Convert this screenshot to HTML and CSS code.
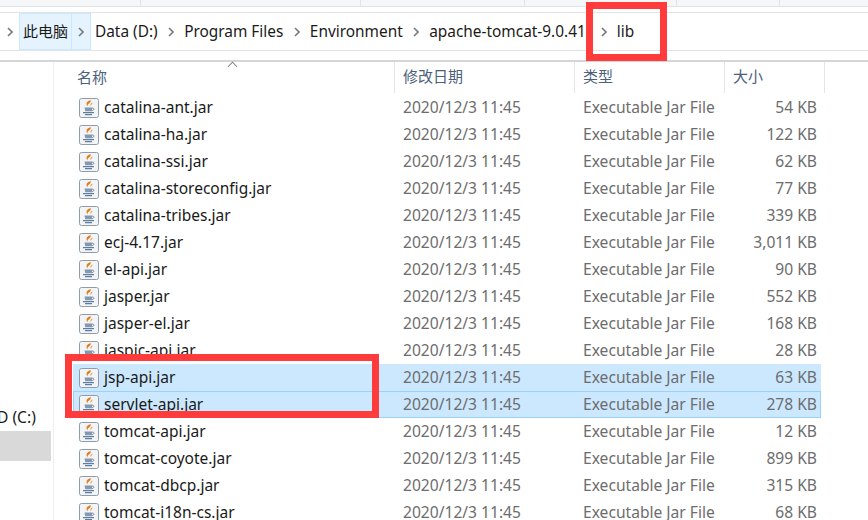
FILE: index.html
```html
<!DOCTYPE html>
<html lang="zh-CN">
<head>
    <meta charset="UTF-8">
    <title>lib</title>
    <link rel="stylesheet" href="styles.css">
</head>
<body>
    <svg class="defs" width="0" height="0">
        <symbol id="jar" viewBox="0 0 20 20">
            <rect x="0.5" y="0.5" width="19" height="19" rx="2" fill="#f3f4f6" stroke="#8e9cab"/>
            <path d="M11.500 2c-4 1.800-5 3.500-3 6.500 -.2-1.800 .9-2.500 2-3.400 1.200-1 1.500-2 1-3.100z" fill="#e67a14"/>
            <path d="M13.500 4.500c-2.200 1-2.500 2.400-1.500 4 -.1-1.200 .5-1.800 1-2.400 .4-.5 .6-1 .5-1.600z" fill="#ef9a45"/>
            <path d="M5.500 9.500h8l-.8 3.800h-6.400z" fill="#8297b0"/>
            <path d="M13.300 10.200c2.300-.3 2.300 2.200-.8 2.600" fill="none" stroke="#7489a3"/>
            <path d="M4 14.600h11M6 16.600h7" stroke="#5f7d9f" stroke-width="1.200"/>
        </symbol>
        <symbol id="chevron" viewBox="0 0 6 10">
            <path d="M1 1l4 4-4 4" fill="none" stroke="#7a7a7a" stroke-width="1.600"/>
        </symbol>
    </svg>
    <div class="tabs">
        <span class="tab tab-a"></span>
        <span class="tab tab-b"></span>
        <span class="tab tab-c"></span>
        <span class="tab tab-d"></span>
        <span class="tab tab-e"></span>
    </div>
    <nav class="address">
        <span class="sep first"><svg class="chevron"><use href="#chevron"/></svg></span>
        <span class="crumb hot">此电脑</span>
        <span class="sep hot-sep"><svg class="chevron"><use href="#chevron"/></svg></span>
        <span class="crumb data">Data (D:)</span>
        <span class="sep"><svg class="chevron"><use href="#chevron"/></svg></span>
        <span class="crumb">Program Files</span>
        <span class="sep"><svg class="chevron"><use href="#chevron"/></svg></span>
        <span class="crumb">Environment</span>
        <span class="sep"><svg class="chevron"><use href="#chevron"/></svg></span>
        <span class="crumb">apache-tomcat-9.0.41</span>
        <span class="sep last"><svg class="chevron"><use href="#chevron"/></svg></span>
        <span class="crumb">lib</span>
    </nav>
    <div class="main">
        <aside class="sidebar">
            <div class="drive">D (C:)</div>
            <div class="drive-selected"></div>
        </aside>
        <section class="files">
            <div class="sort-arrow"></div>
            <div class="row head">
                <div class="c-name">名称</div>
                <div class="c-date">修改日期</div>
                <div class="c-type">类型</div>
                <div class="c-size">大小</div>
            </div>
            <div class="row"><div class="c-name"><svg class="icon"><use href="#jar"/></svg>catalina-ant.jar</div><div class="c-date">2020/12/3 11:45</div><div class="c-type">Executable Jar File</div><div class="c-size">54 KB</div></div>
            <div class="row"><div class="c-name"><svg class="icon"><use href="#jar"/></svg>catalina-ha.jar</div><div class="c-date">2020/12/3 11:45</div><div class="c-type">Executable Jar File</div><div class="c-size">122 KB</div></div>
            <div class="row"><div class="c-name"><svg class="icon"><use href="#jar"/></svg>catalina-ssi.jar</div><div class="c-date">2020/12/3 11:45</div><div class="c-type">Executable Jar File</div><div class="c-size">62 KB</div></div>
            <div class="row"><div class="c-name"><svg class="icon"><use href="#jar"/></svg>catalina-storeconfig.jar</div><div class="c-date">2020/12/3 11:45</div><div class="c-type">Executable Jar File</div><div class="c-size">77 KB</div></div>
            <div class="row"><div class="c-name"><svg class="icon"><use href="#jar"/></svg>catalina-tribes.jar</div><div class="c-date">2020/12/3 11:45</div><div class="c-type">Executable Jar File</div><div class="c-size">339 KB</div></div>
            <div class="row"><div class="c-name"><svg class="icon"><use href="#jar"/></svg>ecj-4.17.jar</div><div class="c-date">2020/12/3 11:45</div><div class="c-type">Executable Jar File</div><div class="c-size">3,011 KB</div></div>
            <div class="row"><div class="c-name"><svg class="icon"><use href="#jar"/></svg>el-api.jar</div><div class="c-date">2020/12/3 11:45</div><div class="c-type">Executable Jar File</div><div class="c-size">90 KB</div></div>
            <div class="row"><div class="c-name"><svg class="icon"><use href="#jar"/></svg>jasper.jar</div><div class="c-date">2020/12/3 11:45</div><div class="c-type">Executable Jar File</div><div class="c-size">552 KB</div></div>
            <div class="row"><div class="c-name"><svg class="icon"><use href="#jar"/></svg>jasper-el.jar</div><div class="c-date">2020/12/3 11:45</div><div class="c-type">Executable Jar File</div><div class="c-size">168 KB</div></div>
            <div class="row"><div class="c-name"><svg class="icon"><use href="#jar"/></svg>jaspic-api.jar</div><div class="c-date">2020/12/3 11:45</div><div class="c-type">Executable Jar File</div><div class="c-size">28 KB</div></div>
            <div class="row selected"><div class="c-name"><svg class="icon"><use href="#jar"/></svg>jsp-api.jar</div><div class="c-date">2020/12/3 11:45</div><div class="c-type">Executable Jar File</div><div class="c-size">63 KB</div></div>
            <div class="row selected focused"><div class="c-name"><svg class="icon"><use href="#jar"/></svg>servlet-api.jar</div><div class="c-date">2020/12/3 11:45</div><div class="c-type">Executable Jar File</div><div class="c-size">278 KB</div></div>
            <div class="row"><div class="c-name"><svg class="icon"><use href="#jar"/></svg>tomcat-api.jar</div><div class="c-date">2020/12/3 11:45</div><div class="c-type">Executable Jar File</div><div class="c-size">12 KB</div></div>
            <div class="row"><div class="c-name"><svg class="icon"><use href="#jar"/></svg>tomcat-coyote.jar</div><div class="c-date">2020/12/3 11:45</div><div class="c-type">Executable Jar File</div><div class="c-size">899 KB</div></div>
            <div class="row"><div class="c-name"><svg class="icon"><use href="#jar"/></svg>tomcat-dbcp.jar</div><div class="c-date">2020/12/3 11:45</div><div class="c-type">Executable Jar File</div><div class="c-size">315 KB</div></div>
            <div class="row"><div class="c-name"><svg class="icon"><use href="#jar"/></svg>tomcat-i18n-cs.jar</div><div class="c-date">2020/12/3 11:45</div><div class="c-type">Executable Jar File</div><div class="c-size">68 KB</div></div>
        </section>
    </div>
    <div class="mark mark-lib"></div>
    <div class="mark mark-rows"></div>
</body>
</html>
```

FILE: styles.css
```css
html, body {
    height: 100%;
}
body {
    margin: 0;
    overflow: hidden;
    background: #fff;
    font-family: "Noto Sans", "Noto Sans CJK SC", sans-serif;
    font-size: 15.6px;
    color: #1a1a1a;
}
.defs {
    display: none;
}
.tabs {
    display: flex;
    height: 6px;
    background: #f5f6f7;
    border-bottom: 1px solid #e2e3e5;
}
.tab {
    border-right: 1px solid #e2e3e5;
}
.tab-a { width: 140px; }
.tab-b { width: 219px; }
.tab-c { width: 163px; }
.tab-d { width: 151px; }
.tab-e { width: 102px; }
.address {
    display: flex;
    align-items: center;
    height: 37px;
    margin-top: 5px;
    border-top: 1px solid #e2e3e5;
    border-bottom: 1px solid #e2e3e5;
    font-size: 15.4px;
}
.crumb {
    white-space: nowrap;
}
.data {
    margin-left: 4px;
}
.sep {
    display: flex;
    flex: none;
    align-items: center;
    justify-content: center;
    width: 26.5px;
}
.first {
    width: 19px;
}
.last {
    box-sizing: border-box;
    width: 31px;
    padding-left: 5px;
}
.chevron {
    width: 6px;
    height: 10px;
}
.hot, .hot-sep {
    display: flex;
    align-items: center;
    align-self: stretch;
    box-sizing: border-box;
    background: #e5f3ff;
    border: 1px solid #cce8ff;
}
.hot {
    width: 53px;
    padding: 0 0 2px 3px;
    font-size: 15px;
}
.hot-sep {
    width: 19px;
    border-left: 0;
}
.main {
    display: flex;
    margin-top: 9px;
    border-top: 2px solid #d5d5d5;
    height: 459px;
}
.sidebar {
    width: 53px;
    border-right: 1px solid #eee;
    overflow: hidden;
    flex: none;
}
.drive {
    margin: 344px 0 0 -3px;
    line-height: 22px;
}
.drive-selected {
    width: 51px;
    height: 30px;
    margin-top: 3px;
    background: #d9d9d9;
}
.files {
    position: relative;
    padding-left: 19px;
}
.sort-arrow {
    position: absolute;
    left: 175px;
    top: 1px;
    width: 6px;
    height: 6px;
    border-left: 1px solid #888;
    border-top: 1px solid #888;
    transform: rotate(45deg);
}
.row {
    display: grid;
    grid-template-columns: 322px 180px 150px 96px;
    width: 748px;
    height: 27px;
    line-height: 27px;
    box-sizing: border-box;
    white-space: nowrap;
}
.row > div {
    overflow: hidden;
}
.head {
    grid-template-columns: 322px 180px 150px 100px;
    width: 752px;
    height: 32px;
    line-height: 29px;
    font-size: 15px;
}
.head > div {
    height: 31px;
    border-right: 1px solid #e5e5e5;
    box-sizing: border-box;
}
.c-name {
    padding-left: 4px;
    display: flex;
    align-items: center;
    font-size: 15.5px;
}
.c-date, .c-type, .c-size {
    padding-left: 8px;
    color: #6d6d6d;
}
.c-size {
    text-align: right;
    padding: 0 4px 0 0;
}
.head .c-name, .head .c-date, .head .c-type, .head .c-size {
    color: #4c607a;
    font-size: 15px;
}
.head .c-size {
    padding-left: 8px;
    text-align: left;
}
.icon {
    width: 20px;
    height: 20px;
    margin: 0 5px 0 2px;
    flex: none;
}
.selected {
    background: #cce8ff;
}
.focused {
    box-shadow: inset 0 0 0 1px #99d1ff;
}
.mark {
    position: absolute;
    border: 7px solid #ff3b3b;
    box-sizing: border-box;
}
.mark-lib {
    left: 586px;
    top: 2px;
    width: 81px;
    height: 59px;
}
.mark-rows {
    left: 65px;
    top: 354px;
    width: 314px;
    height: 64px;
}
```
